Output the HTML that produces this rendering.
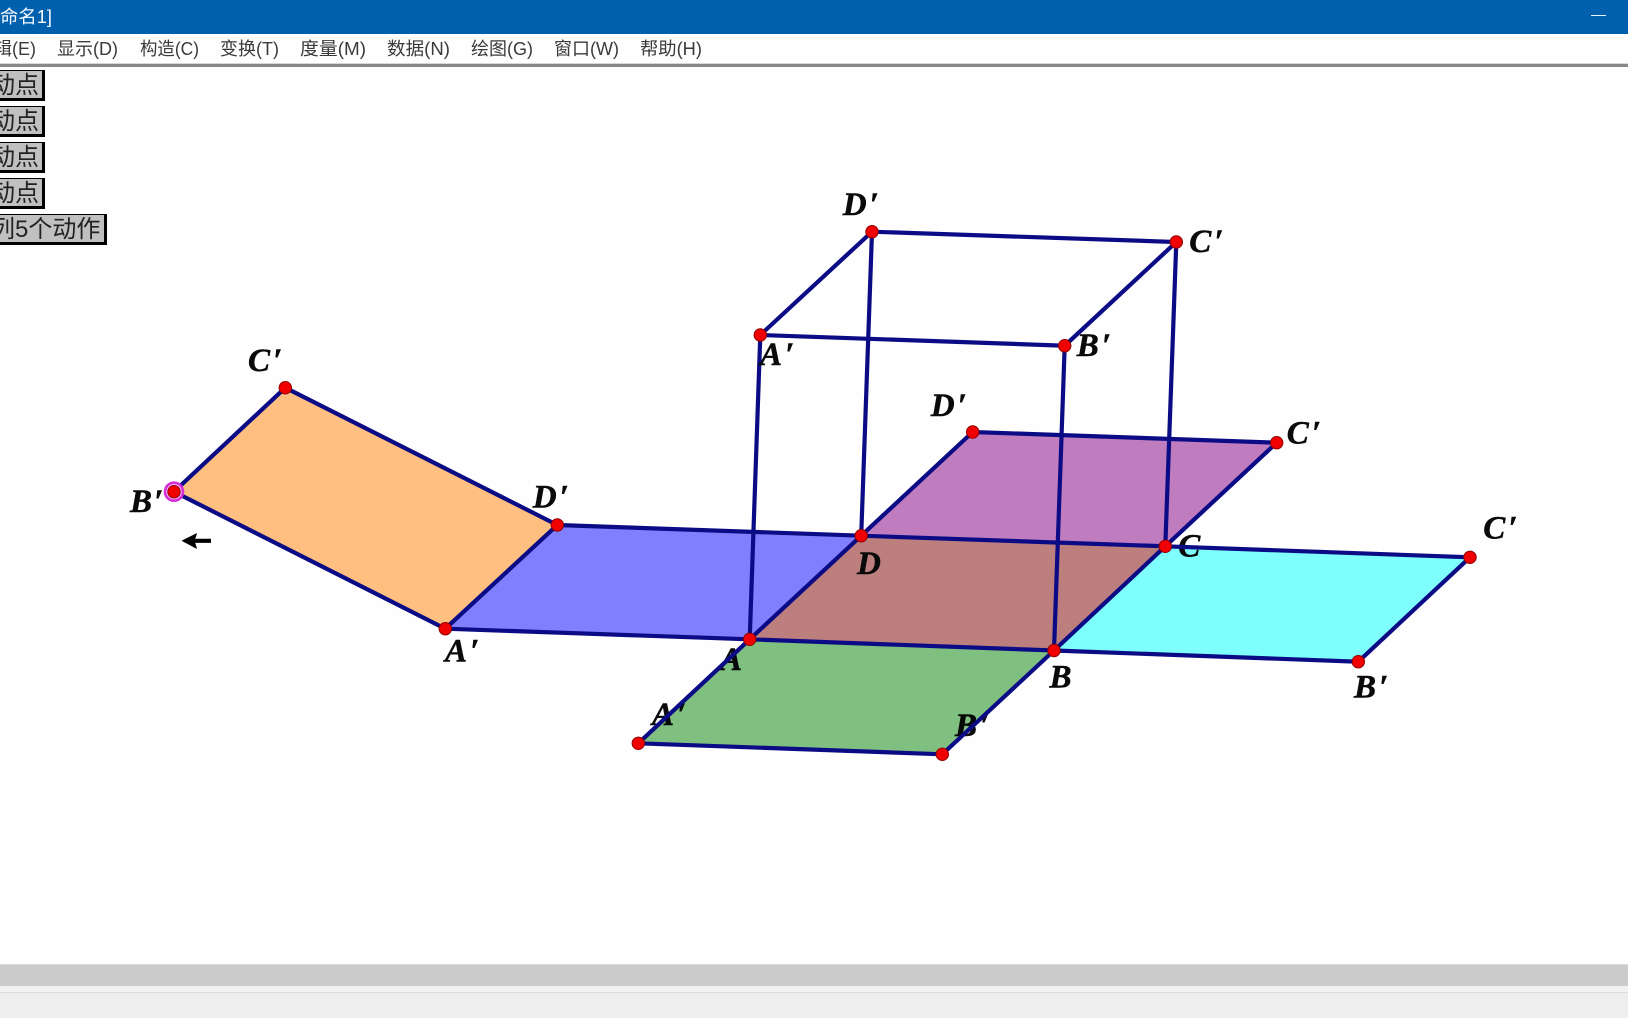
<!DOCTYPE html>
<html lang="zh">
<head>
<meta charset="utf-8">
<title>Sketchpad</title>
<style>
html,body{margin:0;padding:0;width:1628px;height:1018px;overflow:hidden;background:#fefefe}
svg{position:absolute;left:0;top:0;display:block}
.t{font-family:"Liberation Sans","Noto Sans CJK SC",sans-serif;font-size:18px}
.m{fill:#3a3a3a}
.b{font-family:"Liberation Sans","Noto Sans CJK SC",sans-serif;font-size:24px;fill:#222}
.l{font-family:"Liberation Serif",serif;font-weight:bold;font-style:italic;font-size:33px;fill:#0a0a0a;stroke:#0a0a0a;stroke-width:.5px;letter-spacing:3px}
.e{fill:none;stroke:#0b0b85;stroke-width:4.2;stroke-linecap:round}
.p{fill:#f00000;stroke:#900000;stroke-width:1}
</style>
</head>
<body>
<svg width="1628" height="1018" viewBox="0 0 1628 1018" xmlns="http://www.w3.org/2000/svg">
  <rect width="1628" height="1018" fill="#fefefe"/>
  <!-- title bar -->
  <rect x="0" y="0" width="1628" height="34" fill="#0060ad"/>
  <text x="0" y="23" class="t" fill="#f4f8ff" textLength="52" lengthAdjust="spacingAndGlyphs">命名1]</text>
  <rect x="1591" y="15" width="15" height="1" fill="#e8f4ff"/>
  <!-- menu -->
  <rect x="0" y="34" width="1628" height="30" fill="#fefefe"/>
  <rect x="0" y="63" width="1628" height="1" fill="#d8d8d8"/>
  <rect x="0" y="64" width="1628" height="3" fill="#888888"/>
  <text x="-6" y="55" class="t m">辑(E)</text>
  <text x="57" y="55" class="t m" textLength="61" lengthAdjust="spacingAndGlyphs">显示(D)</text>
  <text x="140" y="55" class="t m" textLength="59" lengthAdjust="spacingAndGlyphs">构造(C)</text>
  <text x="220" y="55" class="t m" textLength="59" lengthAdjust="spacingAndGlyphs">变换(T)</text>
  <text x="300" y="55" class="t m" textLength="66" lengthAdjust="spacingAndGlyphs">度量(M)</text>
  <text x="387" y="55" class="t m" textLength="63" lengthAdjust="spacingAndGlyphs">数据(N)</text>
  <text x="471" y="55" class="t m" textLength="62" lengthAdjust="spacingAndGlyphs">绘图(G)</text>
  <text x="554" y="55" class="t m" textLength="65" lengthAdjust="spacingAndGlyphs">窗口(W)</text>
  <text x="640" y="55" class="t m" textLength="62" lengthAdjust="spacingAndGlyphs">帮助(H)</text>
  <!-- buttons -->
  <g>
    <rect x="-4" y="70" width="49" height="31" fill="#000"/><rect x="-4" y="71" width="46" height="27" fill="#c0c0c0"/>
    <text x="-9" y="93" class="b">动点</text>
    <rect x="-4" y="106" width="49" height="31" fill="#000"/><rect x="-4" y="107" width="46" height="27" fill="#c0c0c0"/>
    <text x="-9" y="129" class="b">动点</text>
    <rect x="-4" y="142" width="49" height="31" fill="#000"/><rect x="-4" y="143" width="46" height="27" fill="#c0c0c0"/>
    <text x="-9" y="165" class="b">动点</text>
    <rect x="-4" y="178" width="49" height="31" fill="#000"/><rect x="-4" y="179" width="46" height="27" fill="#c0c0c0"/>
    <text x="-9" y="201" class="b">动点</text>
    <rect x="-4" y="214" width="111" height="31" fill="#000"/><rect x="-4" y="215" width="108" height="27" fill="#c0c0c0"/>
    <text x="-9" y="237" class="b">列5个动作</text>
  </g>
  <!-- labels under fills -->
  <text x="720" y="670" class="l">A</text>
  <text x="652" y="725" class="l">A′</text>
  <text x="955" y="736" class="l">B′</text>
  <!-- fills -->
  <polygon points="285.3,387.7 174,491.7 445.3,628.7 557.3,525" fill="#ffbf80"/>
  <polygon points="445.3,628.7 557.3,525 861.2,535.7 749.7,639.3" fill="#8080ff"/>
  <polygon points="861.2,535.7 1165.3,546.3 1276.7,442.7 972.7,432" fill="#bf7cbf"/>
  <polygon points="749.7,639.3 1054,650.5 1165.3,546.3 861.2,535.7" fill="#bd7e7e"/>
  <polygon points="749.7,639.3 1054,650.5 942.3,754.3 638.3,743.3" fill="#80c080" style="mix-blend-mode:multiply"/>
  <polygon points="1054,650.5 1165.3,546.3 1470,557.3 1358.3,661.7" fill="#80ffff" style="mix-blend-mode:multiply"/>
  <text x="1178.3" y="556.7" class="l">C</text>
  <!-- edges -->
  <g class="e">
    <path class="e" d="M285.3 387.7L174 491.7L445.3 628.7L557.3 525Z"/>
    <path class="e" d="M445.3 628.7L749.7 639.3M557.3 525L861.2 535.7"/>
    <path class="e" d="M749.7 639.3L1054 650.5L1165.3 546.3L861.2 535.7Z"/>
    <path class="e" d="M861.2 535.7L972.7 432L1276.7 442.7L1165.3 546.3"/>
    <path class="e" d="M749.7 639.3L638.3 743.3L942.3 754.3L1054 650.5"/>
    <path class="e" d="M1054 650.5L1358.3 661.7L1470 557.3L1165.3 546.3"/>
    <path class="e" d="M760.3 335L872 231.7L1176.3 242L1064.7 345.7Z"/>
    <path class="e" d="M749.7 639.3L760.3 335M861.2 535.7L872 231.7M1054 650.5L1064.7 345.7M1165.3 546.3L1176.3 242"/>
  </g>
  <!-- highlighted point ring -->
  <circle cx="174" cy="491.7" r="9" fill="#ffb8ff" stroke="#d62ed6" stroke-width="2.6"/>
  <!-- points -->
  <g>
    <circle class="p" cx="285.3" cy="387.7" r="6.2"/>
    <circle class="p" cx="174" cy="491.7" r="6.2"/>
    <circle class="p" cx="445.3" cy="628.7" r="6.2"/>
    <circle class="p" cx="557.3" cy="525" r="6.2"/>
    <circle class="p" cx="749.7" cy="639.3" r="6.2"/>
    <circle class="p" cx="861.2" cy="535.7" r="6.2"/>
    <circle class="p" cx="1054" cy="650.5" r="6.2"/>
    <circle class="p" cx="1165.3" cy="546.3" r="6.2"/>
    <circle class="p" cx="972.7" cy="432" r="6.2"/>
    <circle class="p" cx="1276.7" cy="442.7" r="6.2"/>
    <circle class="p" cx="1470" cy="557.3" r="6.2"/>
    <circle class="p" cx="1358.3" cy="661.7" r="6.2"/>
    <circle class="p" cx="638.3" cy="743.3" r="6.2"/>
    <circle class="p" cx="942.3" cy="754.3" r="6.2"/>
    <circle class="p" cx="760.3" cy="335" r="6.2"/>
    <circle class="p" cx="872" cy="231.7" r="6.2"/>
    <circle class="p" cx="1176.3" cy="242" r="6.2"/>
    <circle class="p" cx="1064.7" cy="345.7" r="6.2"/>
  </g>
  <!-- labels -->
  <text x="248" y="371" class="l">C′</text>
  <text x="130" y="512" class="l">B</text>
  <text x="532.7" y="507.7" class="l">D′</text>
  <text x="445" y="661.7" class="l">A′</text>
  <text x="842.7" y="215" class="l">D′</text>
  <text x="1189.3" y="252" class="l">C′</text>
  <text x="760" y="365" class="l">A′</text>
  <text x="1076.7" y="356" class="l">B′</text>
  <text x="930.7" y="416" class="l">D′</text>
  <text x="857" y="574" class="l">D</text>
  <text x="1049.5" y="687.5" class="l">B</text>
  <text x="1286.7" y="443.3" class="l">C′</text>
  <text x="1483.3" y="538.3" class="l">C′</text>
  <text x="1354" y="697.7" class="l">B′</text>
  <text x="154" y="512" class="l">′</text>
  <!-- arrow -->
  <path d="M181.5 540.7L197 533C196 537 195.500 538.500 195 538.700L211 538.700L211 542.900L195 542.900C195.500 543.500 196 545 197 549Z" fill="#000"/>
  <!-- bottom bars -->
  <rect x="0" y="964" width="1628" height="1" fill="#d9d9d9"/>
  <rect x="0" y="965" width="1628" height="21" fill="#cbcbcb"/>
  <rect x="0" y="986" width="1628" height="6" fill="#f1f1f1"/>
  <rect x="0" y="992" width="1628" height="1" fill="#dcdcdc"/>
  <rect x="0" y="993" width="1628" height="25" fill="#eeeeee"/>
</svg>
</body>
</html>
